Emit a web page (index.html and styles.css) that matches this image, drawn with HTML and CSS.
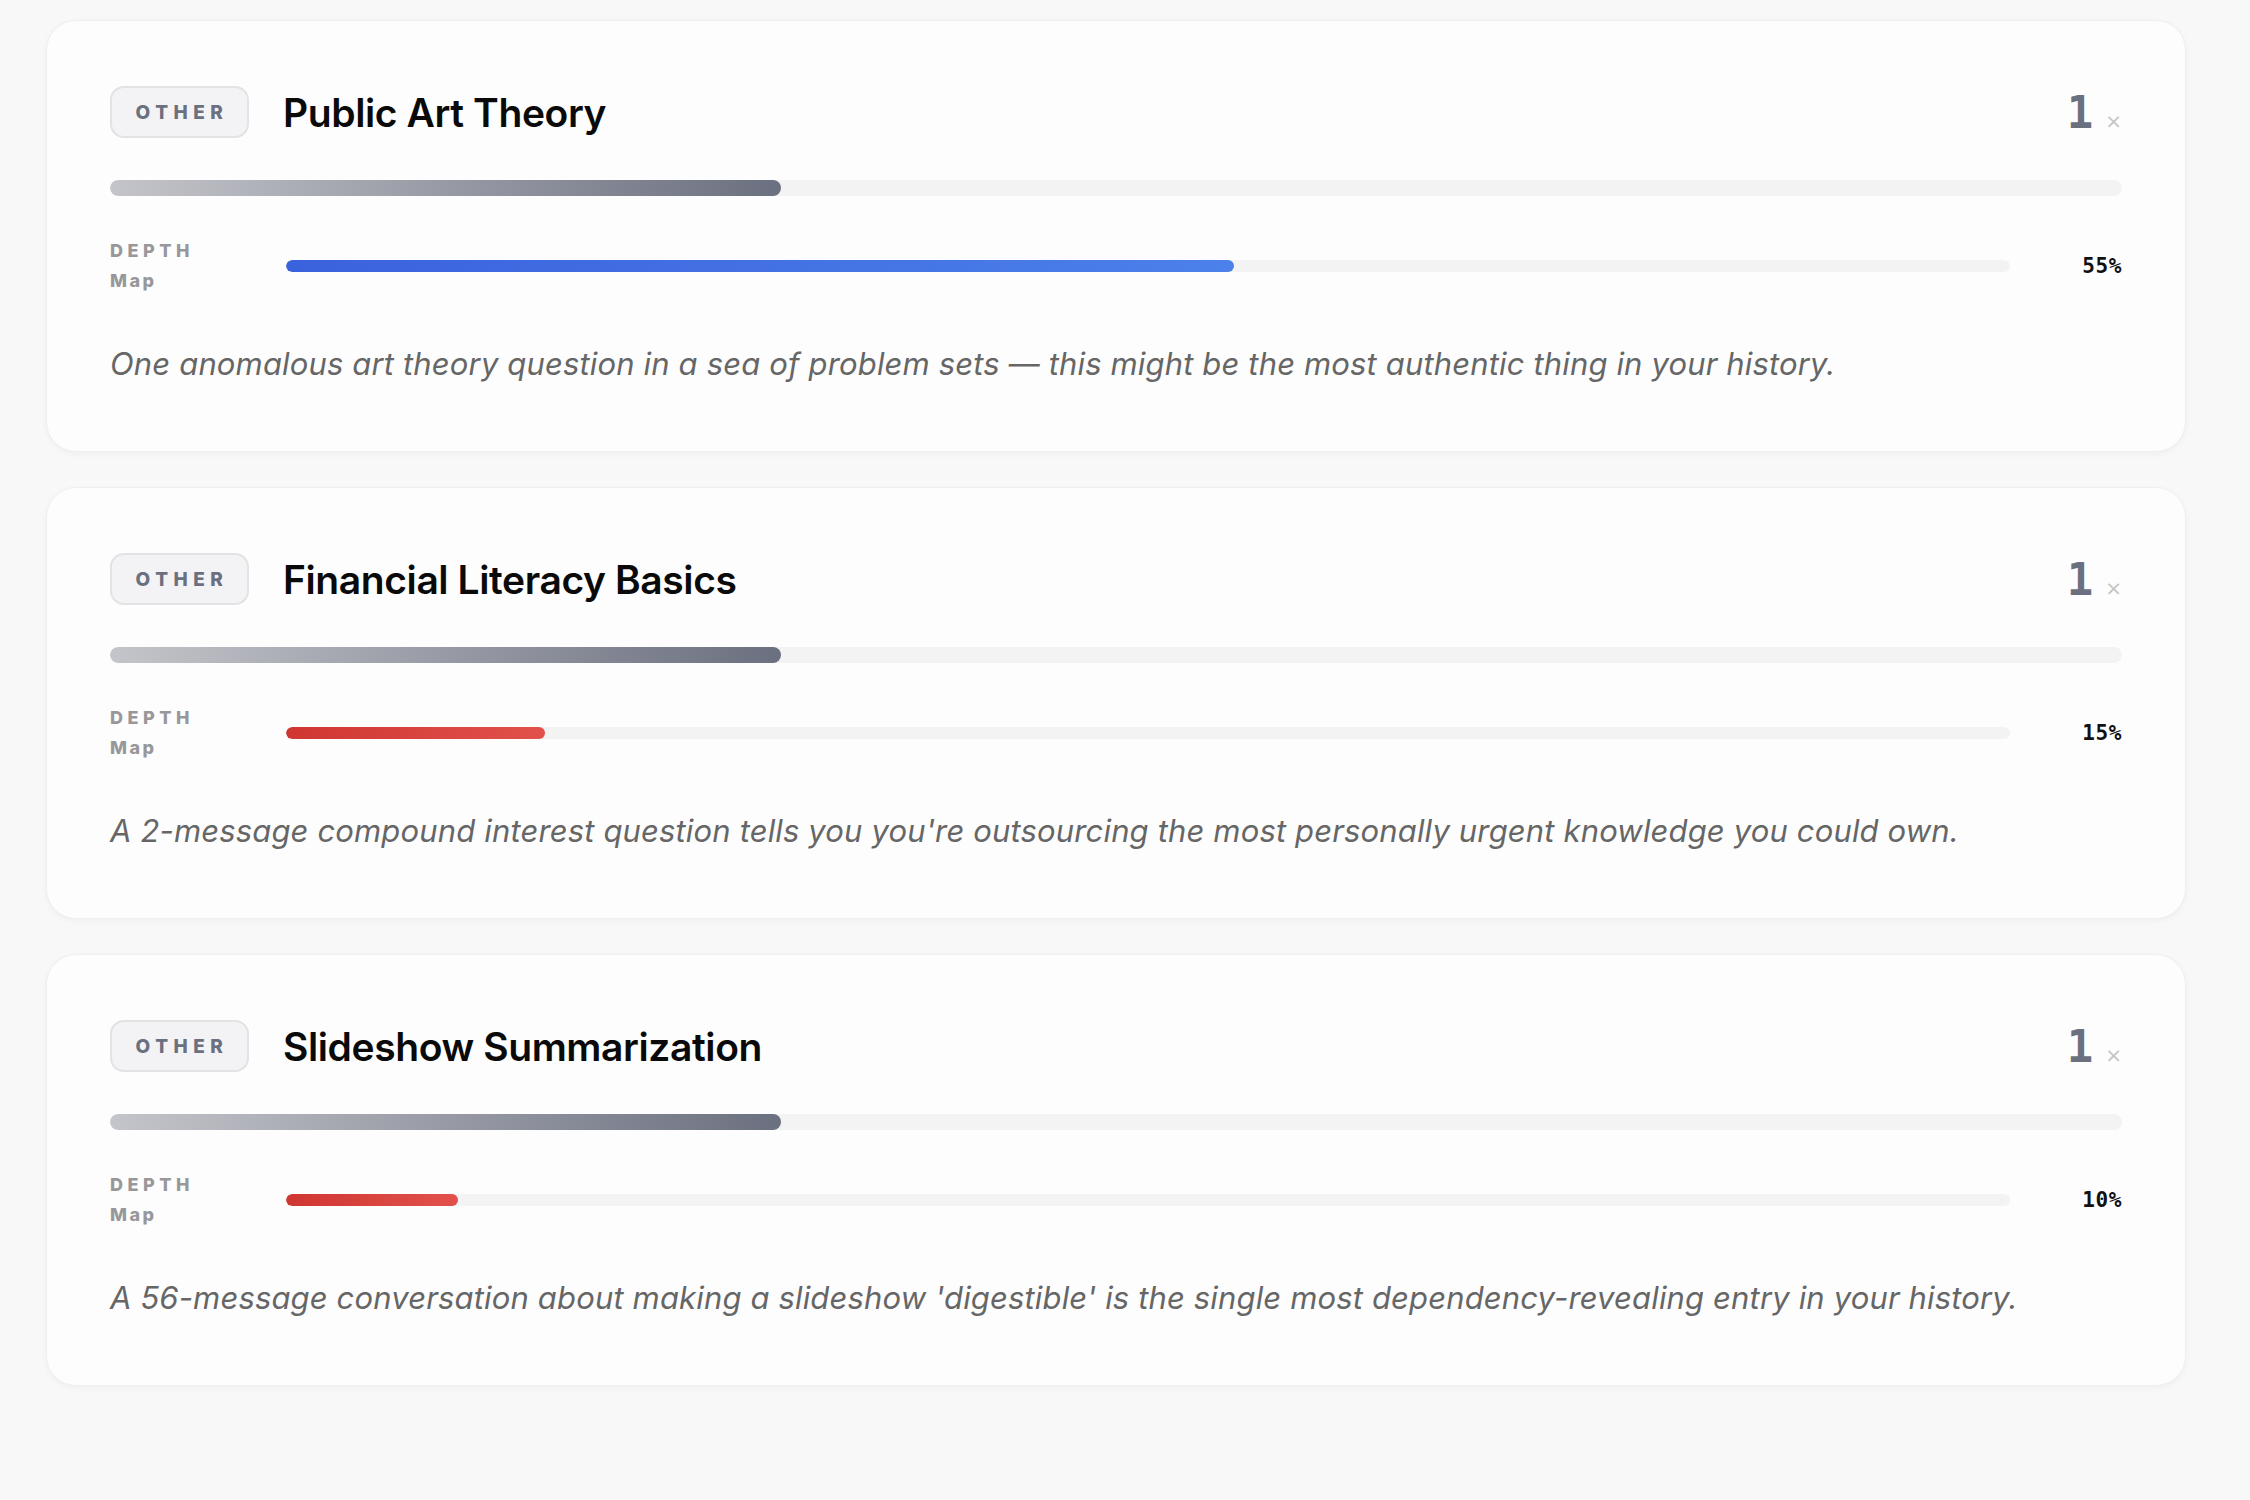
FILE: index.html
```html
<!DOCTYPE html>
<html lang="en">
<head>
<meta charset="utf-8">
<title>Topics</title>
<link rel="stylesheet" href="styles.css">
</head>
<body>
<main class="list">
  <section class="card">
    <header class="card-head">
      <span class="badge">OTHER</span>
      <h2 class="title">Public Art Theory</h2>
      <span class="count">1<span class="times">×</span></span>
    </header>
    <div class="share"><div class="share-fill" style="width:33.33%"></div></div>
    <div class="depth">
      <div class="depth-label"><span class="depth-key">DEPTH</span><span class="depth-val">Map</span></div>
      <div class="track"><div class="fill fill-blue" style="width:55%"></div></div>
      <span class="pct">55%</span>
    </div>
    <p class="desc">One anomalous art theory question in a sea of problem sets — this might be the most authentic thing in your history.</p>
  </section>

  <section class="card">
    <header class="card-head">
      <span class="badge">OTHER</span>
      <h2 class="title">Financial Literacy Basics</h2>
      <span class="count">1<span class="times">×</span></span>
    </header>
    <div class="share"><div class="share-fill" style="width:33.33%"></div></div>
    <div class="depth">
      <div class="depth-label"><span class="depth-key">DEPTH</span><span class="depth-val">Map</span></div>
      <div class="track"><div class="fill fill-red" style="width:15%"></div></div>
      <span class="pct">15%</span>
    </div>
    <p class="desc">A 2-message compound interest question tells you you're outsourcing the most personally urgent knowledge you could own.</p>
  </section>

  <section class="card">
    <header class="card-head">
      <span class="badge">OTHER</span>
      <h2 class="title">Slideshow Summarization</h2>
      <span class="count">1<span class="times">×</span></span>
    </header>
    <div class="share"><div class="share-fill" style="width:33.33%"></div></div>
    <div class="depth">
      <div class="depth-label"><span class="depth-key">DEPTH</span><span class="depth-val">Map</span></div>
      <div class="track"><div class="fill fill-red" style="width:10%"></div></div>
      <span class="pct">10%</span>
    </div>
    <p class="desc">A 56-message conversation about making a slideshow 'digestible' is the single most dependency-revealing entry in your history.</p>
  </section>
</main>
</body>
</html>
```

FILE: styles.css
```css
html, body {
  margin: 0;
  padding: 0;
  background: #f8f8f8;
  font-family: Inter, "Noto Sans", "Liberation Sans", sans-serif;
  color: #111;
}

.list {
  display: flex;
  flex-direction: column;
  gap: 35px;
  padding: 20px 64px 60px 46px;
}

.card {
  background: #fdfdfd;
  border: 1px solid #efefef;
  border-radius: 30px;
  box-shadow: 0 2px 6px rgba(0, 0, 0, 0.04);
  padding: 65px 63px 65px;
}

.card-head {
  display: flex;
  align-items: center;
  height: 52px;
}

.badge {
  box-sizing: border-box;
  height: 52px;
  width: 139px;
  display: inline-flex;
  align-items: center;
  justify-content: center;
  padding: 0 0 0 5px;
  border: 2px solid #e3e3e5;
  border-radius: 14px;
  background: #f3f3f5;
  color: #6b7080;
  font-size: 19px;
  font-weight: 800;
  letter-spacing: 5.5px;
}

.title {
  margin: 0 0 0 34px;
  font-size: 39px;
  font-weight: 600;
  letter-spacing: -0.4px;
  color: #0a0a0a;
  flex: 1;
}

.count {
  font-family: "DejaVu Sans Mono", "Liberation Mono", monospace;
  font-size: 44px;
  line-height: 52px;
  font-weight: 700;
  color: #6b7080;
  display: flex;
  align-items: baseline;
  margin-top: 10px;
}

.times {
  font-family: "DejaVu Sans", sans-serif;
  font-size: 20px;
  font-weight: 400;
  color: #c4c4c4;
  margin-left: 12px;
}

.share {
  margin-top: 42px;
  height: 16px;
  border-radius: 8px;
  background: #f3f3f3;
  overflow: hidden;
}

.share-fill {
  height: 100%;
  border-radius: 8px;
  background: linear-gradient(90deg, #c4c5ca 0%, #6b7080 100%);
}

.depth {
  margin-top: 40px;
  display: grid;
  grid-template-columns: 176px 1fr 112px;
  align-items: center;
}

.depth-label {
  display: flex;
  flex-direction: column;
  font-size: 18px;
  font-weight: 800;
  line-height: 30px;
  color: #98989b;
}

.depth-key {
  letter-spacing: 4.5px;
}

.depth-val {
  letter-spacing: 2.5px;
}

.track {
  height: 12px;
  border-radius: 6px;
  background: #f3f3f3;
  overflow: hidden;
}

.fill {
  height: 100%;
  border-radius: 6px;
}

.fill-blue {
  background: linear-gradient(90deg, #3a62dd 0%, #4c80ea 100%);
}

.fill-red {
  background: linear-gradient(90deg, #cf3632 0%, #e2514b 100%);
}

.pct {
  text-align: right;
  font-family: "DejaVu Sans Mono", "Liberation Mono", monospace;
  font-size: 21px;
  font-weight: 700;
  letter-spacing: 0.6px;
  color: #111;
}

.desc {
  margin: 45px 0 0;
  font-size: 31px;
  line-height: 45px;
  font-style: italic;
  color: #666;
  letter-spacing: 0.15px;
}
```
